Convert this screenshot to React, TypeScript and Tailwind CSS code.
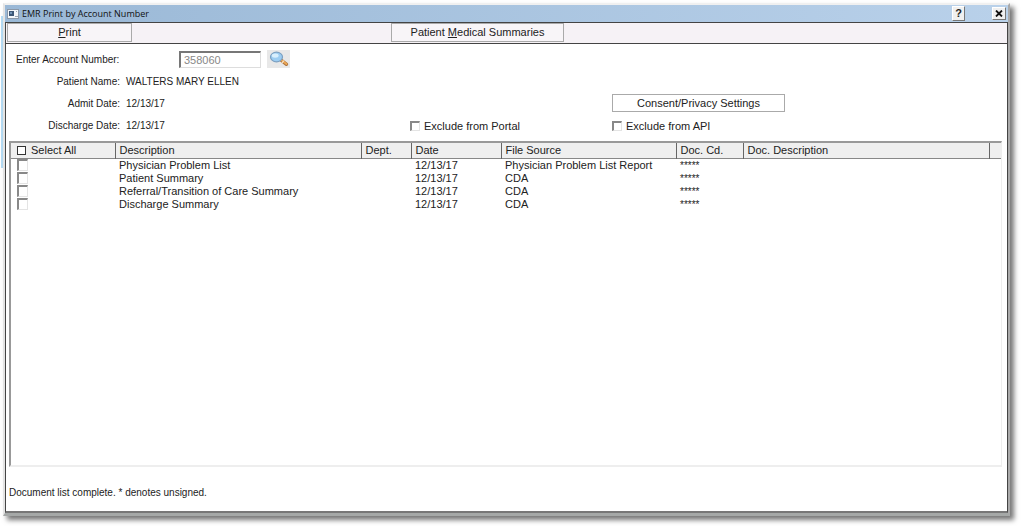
import { useState } from "react"

const documents = [
  { description: "Physician Problem List", date: "12/13/17", source: "Physician Problem List Report", code: "*****" },
  { description: "Patient Summary", date: "12/13/17", source: "CDA", code: "*****" },
  { description: "Referral/Transition of Care Summary", date: "12/13/17", source: "CDA", code: "*****" },
  { description: "Discharge Summary", date: "12/13/17", source: "CDA", code: "*****" },
]

const columns = [
  { title: "Description", width: "w-[246px]" },
  { title: "Dept.", width: "w-[50px]" },
  { title: "Date", width: "w-[90px]" },
  { title: "File Source", width: "w-[175px]" },
  { title: "Doc. Cd.", width: "w-[67px]" },
  { title: "Doc. Description", width: "" },
]

const checkbox =
  "block shrink-0 appearance-none border-t-2 border-l-2 border-r border-b border-t-[#888] border-l-[#888] border-r-[#e4e4e4] border-b-[#e4e4e4] bg-white checked:bg-[#555]"

function WindowIcon() {
  return (
    <svg className="h-[10px] w-[12px]" viewBox="0 0 12 10">
      <rect x="0.5" y="0.5" width="11" height="9" fill="#f4f7fa" stroke="#8b98a8" />
      <rect x="2" y="2" width="5" height="5" fill="#3e5877" />
      <rect x="3" y="3" width="2" height="2" fill="#7496b8" />
      <path d="M8 7.5h3M9 2.5h1" stroke="#9aa5b1" />
    </svg>
  )
}

function SearchIcon() {
  return (
    <svg className="h-[16px] w-[20px]" viewBox="0 0 20 16">
      <path d="M12 9 17.5 13.3" stroke="#a8703c" strokeWidth="3.4" strokeLinecap="round" />
      <path d="M12 8.7 17.5 13" stroke="#eda855" strokeWidth="2" strokeLinecap="round" />
      <path d="M13 11.8 15 9.6" stroke="#f6e3c8" strokeWidth="1.2" />
      <ellipse cx="7.5" cy="6" rx="6" ry="4.8" fill="#9ccdf2" stroke="#7b9fc0" strokeWidth="1.2" />
      <ellipse cx="6.2" cy="4.6" rx="3.4" ry="2.2" fill="#d8effd" />
    </svg>
  )
}

function Field({ label, value }: { label: string; value: string }) {
  return (
    <div className="flex h-[22px] items-center gap-[6px]">
      <dt className="w-[104px] text-right">{label}</dt>
      <dd>{value}</dd>
    </div>
  )
}

function Option({ id, label }: { id: string; label: string }) {
  return (
    <div className="flex h-[18px] items-center gap-[4px]">
      <input id={id} type="checkbox" className={`h-[10px] w-[10px] ${checkbox}`} />
      <label htmlFor={id}>{label}</label>
    </div>
  )
}

export default function App() {
  const [selected, setSelected] = useState<number[]>([])
  const allSelected = selected.length === documents.length

  const toggle = (row: number) =>
    setSelected(selected.includes(row) ? selected.filter((r) => r !== row) : [...selected, row])

  return (
    <div className="relative flex min-h-screen bg-white pt-[3px] pr-[11px] pb-[10px] pl-[3px] font-['Liberation_Sans',Arial,sans-serif] text-[11px] leading-[13px] text-[#222]">
      <div className="absolute top-[16px] left-px h-[152px] w-[2px] bg-[#b5dcf5]" />
      <div className="relative flex flex-1 flex-col border-t-2 border-r-2 border-b-3 border-l-2 border-t-[#f0f0f0] border-r-[#aaa] border-b-[#a5a8a7] border-l-[#e4e4e4] shadow-[4px_4px_5px_#777]">
        <div className="flex h-[17px] items-center bg-linear-to-r from-[#9ab8d6] to-[#b9d1ea] pr-[2px] pl-[2px]">
          <WindowIcon />
          <h1 className="flex-1 pl-[3px] font-['Open_Sans',sans-serif] text-[9px] text-[#111]">EMR Print by Account Number</h1>
          <button aria-label="Help" className="mr-[27px] h-[15px] w-[13px] border border-t-white border-r-[#777] border-b-[#777] border-l-white bg-[#f0f0f0] text-[11px] leading-[13px] font-bold">
            ?
          </button>
          <button aria-label="Close" className="flex h-[13px] w-[14px] items-center justify-center border border-t-white border-r-[#777] border-b-[#777] border-l-white bg-[#f0f0f0]">
            <svg className="h-[7px] w-[8px]" viewBox="0 0 8 7">
              <path d="M1 0.5 7 6.5M7 0.5 1 6.5" stroke="#111" strokeWidth="1.8" />
            </svg>
          </button>
        </div>

        <div className="flex flex-1 flex-col border border-b-2 border-[#444] border-b-[#777] bg-white">
          <div className="grid h-[21px] grid-cols-[384px_1fr] items-start border-b border-[#444] bg-[#f6f2f6] pl-px">
            <button className="h-[19px] w-[125px] border border-[#aaa] bg-[#f8f5f8]">
              <u>P</u>rint
            </button>
            <button className="h-[19px] w-[173px] border border-[#aaa] bg-[#f8f5f8]">
              Patient <u>M</u>edical Summaries
            </button>
          </div>

          <div className="flex pt-[4px] pl-[10px]">
            <div className="w-[394px] text-[10px]">
              <div className="flex h-[22px] items-center">
                <label htmlFor="account" className="w-[163px]">
                  Enter Account Number:
                </label>
                <input
                  id="account"
                  defaultValue="358060"
                  className="h-[17px] w-[82px] border-t-2 border-l-2 border-r border-b border-t-[#777] border-l-[#777] border-r-[#ddd] border-b-[#ddd] bg-white px-[3px] text-[11px] text-[#888] outline-none"
                />
                <button aria-label="Find account" className="ml-[6px] flex h-[18px] w-[23px] items-center justify-center bg-[#e8e8e8]">
                  <SearchIcon />
                </button>
              </div>
              <dl>
                <Field label="Patient Name:" value="WALTERS MARY ELLEN" />
                <Field label="Admit Date:" value="12/13/17" />
                <Field label="Discharge Date:" value="12/13/17" />
              </dl>
            </div>
            <div className="grid grid-cols-[202px_173px] content-end gap-y-[5px] pb-px">
              <button className="col-start-2 h-[18px] border border-[#aaa] bg-white">Consent/Privacy Settings</button>
              <Option id="portal" label="Exclude from Portal" />
              <Option id="api" label="Exclude from API" />
            </div>
          </div>

          <div className="mt-[5px] mr-[5px] ml-[3px] flex-1 border-t-2 border-r border-b-2 border-l-2 border-t-[#999] border-r-[#eee] border-b-[#eee] border-l-[#999]">
            <table className="w-full table-fixed border-collapse text-left">
              <thead>
                <tr className="h-[15px] border-b border-[#888] bg-[#efefef]">
                  <th className="w-[104px] border-r border-[#666] p-0 pl-[6px] font-normal">
                    <div className="flex items-center gap-[5px]">
                      <input
                        id="all"
                        type="checkbox"
                        checked={allSelected}
                        onChange={() => setSelected(allSelected ? [] : documents.map((_, i) => i))}
                        className="block h-[9px] w-[9px] shrink-0 appearance-none border border-[#333] bg-white checked:bg-[#555]"
                      />
                      <label htmlFor="all">Select All</label>
                    </div>
                  </th>
                  {columns.map((column) => (
                    <th key={column.title} className={`border-r border-[#666] p-0 pl-[4px] font-normal ${column.width}`}>
                      {column.title}
                    </th>
                  ))}
                  <td className="w-[12px] p-0" />
                </tr>
              </thead>
              <tbody>
                {documents.map((doc, i) => (
                  <tr key={doc.description} className="h-[13px]">
                    <td className="p-0 pl-[6px]">
                      <input
                        type="checkbox"
                        aria-label={doc.description}
                        checked={selected.includes(i)}
                        onChange={() => toggle(i)}
                        className={`h-[12px] w-[11px] ${checkbox}`}
                      />
                    </td>
                    <td className="p-0 pl-[4px]">{doc.description}</td>
                    <td className="p-0" />
                    <td className="p-0 pl-[4px]">{doc.date}</td>
                    <td className="p-0 pl-[4px]">{doc.source}</td>
                    <td className="p-0 pl-[4px] text-[10px]">{doc.code}</td>
                    <td className="p-0" />
                    <td className="p-0" />
                  </tr>
                ))}
              </tbody>
            </table>
          </div>

          <p className="pt-[19px] pb-[12px] pl-[3px] text-[10px]">Document list complete. * denotes unsigned.</p>
        </div>
      </div>
    </div>
  )
}
